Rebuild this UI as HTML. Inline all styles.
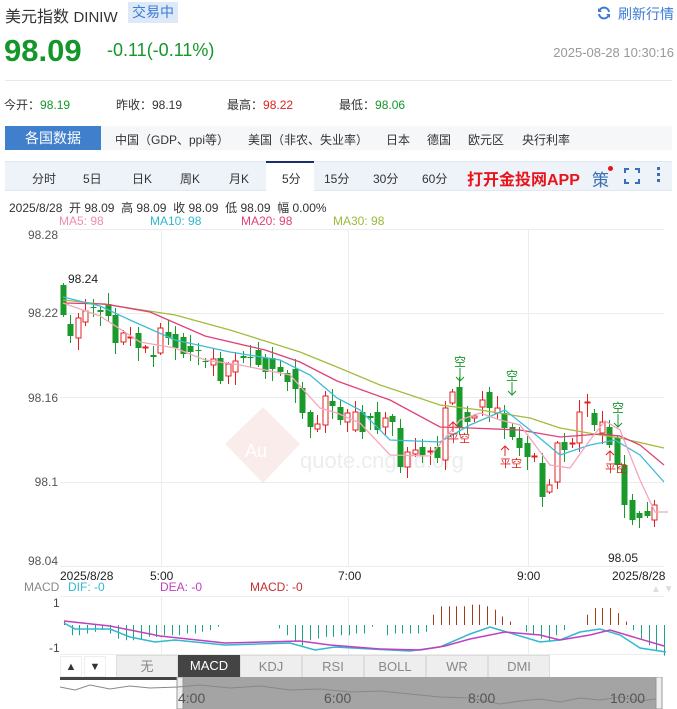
<!DOCTYPE html>
<html><head><meta charset="utf-8">
<style>
*{margin:0;padding:0;box-sizing:border-box}
body{width:677px;height:709px;background:#fff;font-family:"Liberation Sans","Noto Sans CJK SC",sans-serif;position:relative;overflow:hidden;color:#333}
.a{position:absolute;white-space:nowrap}
</style></head><body>
<div class="a" style="left:5px;top:3px;font-size:16px;color:#333">美元指数 <span style="font-size:15px">DINIW</span></div>
<div class="a" style="left:128px;top:2px;width:50px;height:21px;background:#dde9f7;color:#3a7bd5;font-size:14px;line-height:21px;text-align:center">交易中</div>
<svg class="a" style="left:597px;top:6px" width="14" height="14" viewBox="0 0 14 14"><path d="M12 6A5 5 0 0 0 2.5 4.5M2 8a5 5 0 0 0 9.5 1.5" fill="none" stroke="#3a7bd5" stroke-width="2"/><path d="M1 2v4h4z M13 12V8H9z" fill="#3a7bd5"/></svg>
<div class="a" style="left:618px;top:4px;font-size:14px;color:#3a7bd5">刷新行情</div>
<div class="a" style="left:4px;top:33px;font-size:31px;font-weight:bold;color:#15962a">98.09</div>
<div class="a" style="left:107px;top:40px;font-size:18px;color:#15962a">-0.11(-0.11%)</div>
<div class="a" style="right:3px;top:45px;font-size:13px;color:#999">2025-08-28 10:30:16</div>
<div class="a" style="left:5px;top:80px;width:667px;height:1px;background:#e8e8e8"></div>
<div class="a" style="left:4px;top:96px;font-size:12px">今开：<span style="color:#15962a">98.19</span></div>
<div class="a" style="left:116px;top:96px;font-size:12px">昨收：98.19</div>
<div class="a" style="left:227px;top:96px;font-size:12px">最高：<span style="color:#e02020">98.22</span></div>
<div class="a" style="left:339px;top:96px;font-size:12px">最低：<span style="color:#15962a">98.06</span></div>
<div class="a" style="left:5px;top:126px;width:667px;height:24px;background:#f6f7f9"></div>
<div class="a" style="left:5px;top:126px;width:96px;height:24px;background:#3f7fcb;color:#fff;font-size:14px;line-height:24px;text-align:center">各国数据</div>
<div class="a" style="left:115px;top:131px;font-size:12px">中国（GDP、ppi等）</div>
<div class="a" style="left:248px;top:131px;font-size:12px">美国（非农、失业率）</div>
<div class="a" style="left:386px;top:131px;font-size:12px">日本</div>
<div class="a" style="left:427px;top:131px;font-size:12px">德国</div>
<div class="a" style="left:468px;top:131px;font-size:12px">欧元区</div>
<div class="a" style="left:522px;top:131px;font-size:12px">央行利率</div>
<div class="a" style="left:5px;top:161px;width:667px;height:30px;background:#eef3fa;border-top:1px solid #e2e8f0;border-bottom:1px solid #e2e8f0"></div>
<div class="a" style="left:266px;top:161px;width:48px;height:30px;background:#fff;border-top:2px solid #1a2f6e"></div>
<div class="a" style="top:170px;left:0;font-size:12px;color:#333">
<span class="a" style="left:32px">分时</span><span class="a" style="left:83px">5日</span><span class="a" style="left:132px">日K</span><span class="a" style="left:180px">周K</span><span class="a" style="left:229px">月K</span><span class="a" style="left:282px">5分</span><span class="a" style="left:324px">15分</span><span class="a" style="left:373px">30分</span><span class="a" style="left:422px">60分</span></div>
<div class="a" style="left:467px;top:166px;font-size:16px;font-weight:bold;color:#e8141a">打开金投网APP</div>
<div class="a" style="left:592px;top:166px;font-size:17px;color:#3a6fb5">策</div>
<div class="a" style="left:608px;top:166px;width:5px;height:5px;border-radius:50%;background:#e8141a"></div>
<svg class="a" style="left:624px;top:168px" width="16" height="16"><path d="M1 5V1h4M11 1h4v4M15 11v4h-4M5 15H1v-4" fill="none" stroke="#3a6fb5" stroke-width="2"/></svg>
<div class="a" style="left:657px;top:167px;width:3px;height:3px;background:#3a6fb5;box-shadow:0 6px 0 #3a6fb5,0 12px 0 #3a6fb5"></div>
<div class="a" style="left:9px;top:199px;font-size:12px;color:#333">2025/8/28&nbsp; 开 98.09&nbsp; 高 98.09&nbsp; 收 98.09&nbsp; 低 98.09&nbsp; 幅 0.00%</div>
<div class="a" style="top:214px;left:0;font-size:12px"><span class="a" style="left:59px;color:#f08cb0">MA5: 98</span><span class="a" style="left:150px;color:#30b8d0">MA10: 98</span><span class="a" style="left:241px;color:#e0407a">MA20: 98</span><span class="a" style="left:333px;color:#9cba38">MA30: 98</span></div>

<svg class="a" style="left:0;top:0" width="677" height="709" id="ch">
<g stroke="#ececec" stroke-width="1">
<line x1="60" y1="229.5" x2="664" y2="229.5"/><line x1="60" y1="313.5" x2="664" y2="313.5"/><line x1="60" y1="397.5" x2="664" y2="397.5"/><line x1="60" y1="482.5" x2="664" y2="482.5"/><line x1="60" y1="566.5" x2="664" y2="566.5"/>
<line x1="161.5" y1="229" x2="161.5" y2="566"/><line x1="348.5" y1="229" x2="348.5" y2="566"/><line x1="528.5" y1="229" x2="528.5" y2="566"/>
<line x1="161.5" y1="596" x2="161.5" y2="655"/><line x1="348.5" y1="596" x2="348.5" y2="655"/><line x1="528.5" y1="596" x2="528.5" y2="655"/>
<line x1="60" y1="596.5" x2="664" y2="596.5"/><line x1="60" y1="654.5" x2="664" y2="654.5"/>
</g>
<g font-size="12" fill="#555" font-family="Liberation Sans">
<text x="58" y="239" text-anchor="end">98.28</text><text x="58" y="317" text-anchor="end">98.22</text><text x="58" y="402" text-anchor="end">98.16</text><text x="58" y="486" text-anchor="end">98.1</text><text x="58" y="565" text-anchor="end">98.04</text>
</g>
<g opacity="0.08"><path d="M263 407L300 444L263 483L225 444Z" fill="#d02020"/><text x="245" y="457" font-size="18" fill="#fff">Au</text></g>
<text x="300" y="468" font-size="22" fill="#ededed" font-family="Liberation Sans">quote.cngold.org</text>
<g id="candles"></g>
<g fill="none" stroke-width="1.3">
<polyline stroke="#a4bb3c" points="63,300 110,305 175,315 230,330 300,352 337,367 380,385 440,405 480,410 530,418 560,428 600,435 620,438 664,448"/>
<polyline stroke="#e0407a" points="63,303 105,304 150,312 205,336 265,350 300,362 337,381 390,400 440,427 470,428 520,430 560,437 600,434 620,436 640,445 664,465"/>
<polyline stroke="#3cbcd8" points="63,297 100,306 130,320 175,340 230,352 280,360 310,375 337,398 360,410 390,440 440,442 470,425 505,410 530,430 560,455 590,445 615,440 640,455 664,482"/>
<polyline stroke="#f4a6bf" points="63,303 100,316 140,342 175,348 205,360 240,365 290,375 320,408 337,413 360,423 390,455 430,456 460,420 480,413 500,420 520,425 550,465 570,468 590,440 605,421 620,430 640,480 655,512 668,512"/>
</g>
<g font-family="Liberation Sans" font-size="12" fill="#222">
<text x="68" y="283">98.24</text><text x="608" y="562">98.05</text>
</g>
<g font-size="12" font-family="Noto Sans CJK SC" fill="#15962a">
<text x="454" y="366">空</text><line x1="460" y1="368" x2="460" y2="381" stroke="#15962a"/><path d="M456 377l4 4 4-4" fill="none" stroke="#15962a"/>
<text x="506" y="380">空</text><line x1="512" y1="382" x2="512" y2="395" stroke="#15962a"/><path d="M508 391l4 4 4-4" fill="none" stroke="#15962a"/>
<text x="612" y="412">空</text><line x1="618" y1="414" x2="618" y2="427" stroke="#15962a"/><path d="M614 423l4 4 4-4" fill="none" stroke="#15962a"/>
</g>
<g font-size="11" font-family="Noto Sans CJK SC" fill="#e02020">
<text x="448" y="442">平空</text><line x1="453" y1="422" x2="453" y2="432" stroke="#e02020"/><path d="M449 426l4-4 4 4" fill="none" stroke="#e02020"/>
<text x="500" y="467">平空</text><line x1="505" y1="446" x2="505" y2="456" stroke="#e02020"/><path d="M501 450l4-4 4 4" fill="none" stroke="#e02020"/>
<text x="605" y="472">平空</text><line x1="610" y1="451" x2="610" y2="461" stroke="#e02020"/><path d="M606 455l4-4 4 4" fill="none" stroke="#e02020"/>
</g>
<g font-family="Liberation Sans" font-size="12" fill="#222">
<text x="60" y="580">2025/8/28</text><text x="150" y="580">5:00</text><text x="338" y="580">7:00</text><text x="517" y="580">9:00</text><text x="612" y="580">2025/8/28</text>
</g>
<g font-family="Liberation Sans" font-size="12">
<text x="24" y="591" fill="#888">MACD</text><text x="68" y="591" fill="#30b8d0">DIF: -0</text><text x="160" y="591" fill="#c040c0">DEA: -0</text><text x="250" y="591" fill="#c03030">MACD: -0</text>
<text x="53" y="607" fill="#444">1</text><text x="49" y="652" fill="#444">-1</text>
<text x="651" y="592" fill="#ddd" font-size="10">▲ ▼</text>
</g>
<g id="hist"></g>
<g fill="none" stroke-width="1.5">
<polyline stroke="#30b8d0" points="64,623 75,629 110,629 130,637 155,642 175,640 225,645 290,643 315,650 335,647 390,650 410,651 440,647 470,634 490,627 500,630 540,642 560,640 580,632 600,629 620,635 640,648 666,652"/>
<polyline stroke="#c040c0" points="64,621 110,626 160,636 225,643 300,641 330,645 380,649 420,650 445,646 470,639 505,632 540,635 560,640 590,635 610,630 630,636 664,646"/>
</g>
</svg>

<div class="a" style="left:60px;top:656px;width:22px;height:21px;background:#fff;border:1px solid #eee;font-size:11px;text-align:center;line-height:20px">▲</div>
<div class="a" style="left:84px;top:656px;width:22px;height:21px;background:#fff;border:1px solid #eee;font-size:11px;text-align:center;line-height:20px">▼</div>
<div class="a" style="left:116px;top:655px;font-size:13px;display:flex">
<div style="width:62px;height:23px;background:#eee;border:1px solid #ddd;line-height:21px;text-align:center;color:#888">无</div>
<div style="width:62px;height:23px;background:#444;color:#fff;line-height:21px;text-align:center">MACD</div>
<div style="width:62px;height:23px;background:#eee;border:1px solid #ddd;line-height:21px;text-align:center;color:#888">KDJ</div>
<div style="width:62px;height:23px;background:#eee;border:1px solid #ddd;line-height:21px;text-align:center;color:#888">RSI</div>
<div style="width:62px;height:23px;background:#eee;border:1px solid #ddd;line-height:21px;text-align:center;color:#888">BOLL</div>
<div style="width:62px;height:23px;background:#eee;border:1px solid #ddd;line-height:21px;text-align:center;color:#888">WR</div>
<div style="width:62px;height:23px;background:#eee;border:1px solid #ddd;line-height:21px;text-align:center;color:#888">DMI</div>
</div>
<svg class="a" style="left:60px;top:677px" width="606" height="32">
<rect x="0" y="0" width="606" height="32" fill="#fff"/>
<rect x="0" y="0" width="120" height="3" fill="#444"/>
<rect x="120" y="0" width="478" height="32" fill="#a4a4a4"/>
<rect x="117" y="0" width="6" height="32" fill="#eee" stroke="#999"/>
<rect x="596" y="0" width="6" height="32" fill="#eee" stroke="#999"/>
<polyline fill="none" stroke="#888" points="0,10 15,13 30,8 50,12 70,9 90,11 118,10 140,8 170,11 200,9 230,13 260,12 290,15 320,14 350,17 380,20 410,21 440,27 460,24 480,22 500,25 520,21 540,23 560,20 580,24 596,22"/>
<g font-size="14" fill="#555" font-family="Liberation Sans"><text x="118" y="26">4:00</text><text x="264" y="26">6:00</text><text x="408" y="26">8:00</text><text x="550" y="26">10:00</text></g>
</svg>

<script>
var C=[[285,315,'g'],[324,336,'g'],[318,338,'r'],[311,322,'r'],[307,308,'g'],[310,312,'g'],[304,316,'g'],[315,343,'g'],[333,342,'r'],[337,338,'r'],[333,348,'g'],[347,348,'r'],[355,357,'g'],[328,353,'r'],[332,338,'g'],[334,348,'g'],[337,354,'g'],[346,352,'g'],[350,351,'g'],[361,362,'g'],[359,365,'r'],[358,381,'g'],[364,376,'r'],[361,372,'r'],[356,358,'g'],[357,358,'g'],[350,365,'g'],[358,372,'g'],[358,369,'g'],[367,372,'g'],[373,382,'g'],[369,389,'g'],[388,413,'g'],[412,427,'g'],[424,429,'r'],[396,425,'r'],[401,406,'g'],
[407,420,'g'],[413,422,'r'],[412,430,'r'],[412,432,'g'],[416,418,'g'],[412,430,'g'],[418,427,'r'],[416,422,'g'],[428,467,'g'],[452,467,'r'],[450,454,'r'],[447,455,'g'],[451,452,'r'],[447,458,'g'],[408,460,'r'],[392,403,'r'],[387,428,'g'],[412,422,'g'],[416,418,'r'],[400,407,'r'],[392,408,'g'],[408,413,'r'],[413,428,'g'],[427,437,'g'],[438,448,'g'],[443,457,'g'],[456,457,'r'],[463,497,'g'],[485,492,'r'],[443,482,'r'],[442,450,'g'],[443,444,'r'],[412,443,'r'],[402,403,'r'],[413,425,'g'],[422,433,'r'],[427,445,'g'],[438,465,'g'],[465,505,'g'],[500,520,'g'],[513,518,'g'],[511,516,'g'],[505,520,'r']];
var s='',h='',n=C.length;
for(var i=0;i<n;i++){var x=Math.round(63+i*(654-63)/(n-1))+0.5,c=C[i],col=c[2]=='g'?'#1a9a2a':'#e02020';
var wt=c[0]-2-(i*7%11),wb=c[1]+2+(i*5%13);
s+='<line x1="'+x+'" y1="'+wt+'" x2="'+x+'" y2="'+wb+'" stroke="'+col+'"/>';
var ht=Math.max(c[1]-c[0],1);
if(c[2]=='g')s+='<rect x="'+(x-3)+'" y="'+c[0]+'" width="6" height="'+ht+'" fill="'+col+'"/>';
else s+='<rect x="'+(x-2.5)+'" y="'+c[0]+'" width="5" height="'+ht+'" fill="#fff" stroke="'+col+'"/>';
}
document.getElementById('candles').innerHTML=s;
var H=[2,-6,-6,-5,-4,-3,-5,-8,-9,-9,-8,-7,-7,-6,-6,-6,-5,-5,-4,-3,-1,0,0,0,0,0,0,0,-2,-6,-10,-12,-9,-8,-7,-7,-6,-6,-5,-5,-1,0,-6,-5,-5,-5,-5,-4,6,11,11,11,11,12,12,11,9,5,2,0,-4,-6,-8,-10,-6,-3,0,0,6,10,10,10,7,2,-3,-8,-12,-15,-18];
var m=H.length;
for(var j=0;j<m;j++){var x=Math.round(64+j*(664-64)/(m-1))+0.5,v=H[j];var col=v>0?'#a33a1a':'#1aa58a';
h+='<line x1="'+x+'" y1="625" x2="'+x+'" y2="'+(625-v*1.7)+'" stroke="'+col+'"/>';}
document.getElementById('hist').innerHTML=h;
</script>
</body></html>
